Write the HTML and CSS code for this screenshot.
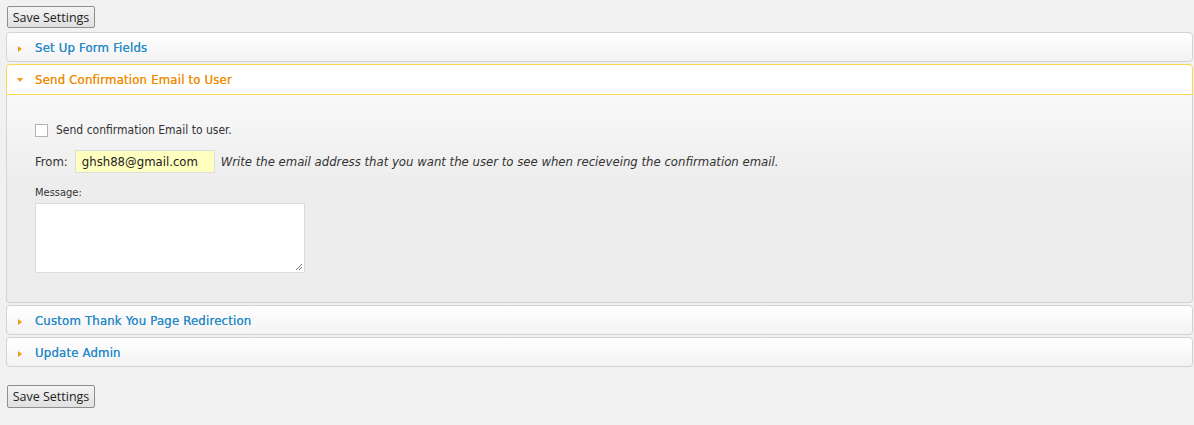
FILE: index.html
```html
<!DOCTYPE html>
<html>
<head>
<meta charset="utf-8">
<link rel="stylesheet" href="styles.css">
</head>
<body>
<div class="page">
  <button class="btn">Save Settings</button>
  <div class="accordion">
    <div class="acc-header"><span class="arrow right"></span>Set Up Form Fields</div>
    <div class="acc-group">
      <div class="acc-header active"><span class="arrow down"></span>Send Confirmation Email to User</div>
      <div class="acc-content">
        <label class="check-row"><span class="checkbox"></span>Send confirmation Email to user.</label>
        <div class="from-row">
          <span class="from-label">From:</span>
          <span class="email-input">ghsh88@gmail.com</span>
          <em class="hint">Write the email address that you want the user to see when recieveing the confirmation email.</em>
        </div>
        <div class="msg-label">Message:</div>
        <div class="textarea"><svg class="grip" width="8" height="8" viewBox="0 0 8 8"><path d="M7 1L1 7M7 4L4 7M7 7L7 7" stroke="#777" stroke-width="1"/></svg></div>
      </div>
    </div>
    <div class="acc-header"><span class="arrow right"></span>Custom Thank You Page Redirection</div>
    <div class="acc-header"><span class="arrow right"></span>Update Admin</div>
  </div>
  <button class="btn btn-bottom">Save Settings</button>
</div>
</body>
</html>
```
FILE: styles.css
```css
html, body {
  margin: 0;
  background: #f1f1f1;
}
.page {
  padding: 6px 1px 0 6px;
  font-family: "DejaVu Sans Condensed", "DejaVu Sans", sans-serif;
  display: flex;
  flex-direction: column;
  align-items: flex-start;
}
.btn {
  margin-left: 1px;
  height: 22px;
  width: 88px;
  padding: 0;
  font-family: "Open Sans", sans-serif;
  font-size: 12.5px;
  color: #222;
  background: linear-gradient(#f4f4f4, #e0e0e0);
  border: 1px solid #8e8e8e;
  border-radius: 2px;
}
.btn-bottom {
  margin-top: 18px;
  height: 23px;
}
.accordion {
  align-self: stretch;
  margin-top: 4px;
  display: flex;
  flex-direction: column;
  gap: 2px;
}
.acc-header {
  height: 28px;
  display: flex;
  align-items: center;
  padding-left: 28px;
  position: relative;
  border: 1px solid #d3d3d3;
  border-radius: 4px;
  background: linear-gradient(#ffffff, #f3f3f3);
  color: #2a8bc8;
  font-size: 13px;
  letter-spacing: 0.2px;
  text-shadow: 0 0 0.3px #2a8bc8;
}
.acc-header.active {
  border-color: #fcd64c;
  border-radius: 4px 4px 0 0;
  color: #ef8c08;
  text-shadow: 0 0 0.3px #ef8c08;
  background: #ffffff;
  height: 29px;
}
.arrow {
  position: absolute;
  left: 11px;
  top: 13px;
  width: 0;
  height: 0;
}
.arrow.right {
  border-top: 3px solid transparent;
  border-bottom: 3px solid transparent;
  border-left: 4px solid #f29a1a;
}
.arrow.down {
  left: 10px;
  top: 13px;
  border-left: 3px solid transparent;
  border-right: 3px solid transparent;
  border-top: 4px solid #f29a1a;
}
.acc-content {
  border: 1px solid #d3d3d3;
  border-top: none;
  border-radius: 0 0 4px 4px;
  background: linear-gradient(#f9f9f9 0, #ededed 90px, #ededed 100%);
  padding: 28px 28px 29px 28px;
  height: 150px;
  font-size: 12px;
  color: #333;
}
.check-row {
  display: flex;
  align-items: center;
  gap: 8px;
  font-size: 12px;
}
.checkbox {
  width: 13px;
  height: 13px;
  box-sizing: border-box;
  border: 1px solid #b4b4b4;
  background: #fff;
}
.from-row {
  display: flex;
  align-items: center;
  margin-top: 13px;
}
.from-label {
  font-size: 13px;
  color: #333;
  margin-right: 7px;
}
.email-input {
  box-sizing: border-box;
  width: 140px;
  height: 23px;
  display: flex;
  align-items: center;
  padding-left: 6px;
  background: #ffffc0;
  border: 1px solid #dedede;
  font-size: 13px;
  color: #222;
}
.hint {
  margin-left: 6px;
  font-size: 13px;
  color: #333;
}
.msg-label {
  margin-top: 13px;
  font-size: 11px;
  color: #333;
}
.textarea {
  margin-top: 4px;
  box-sizing: border-box;
  width: 270px;
  height: 70px;
  background: #fff;
  border: 1px solid #dcdcdc;
  position: relative;
}
.grip {
  position: absolute;
  right: 1px;
  bottom: 1px;
}
```
